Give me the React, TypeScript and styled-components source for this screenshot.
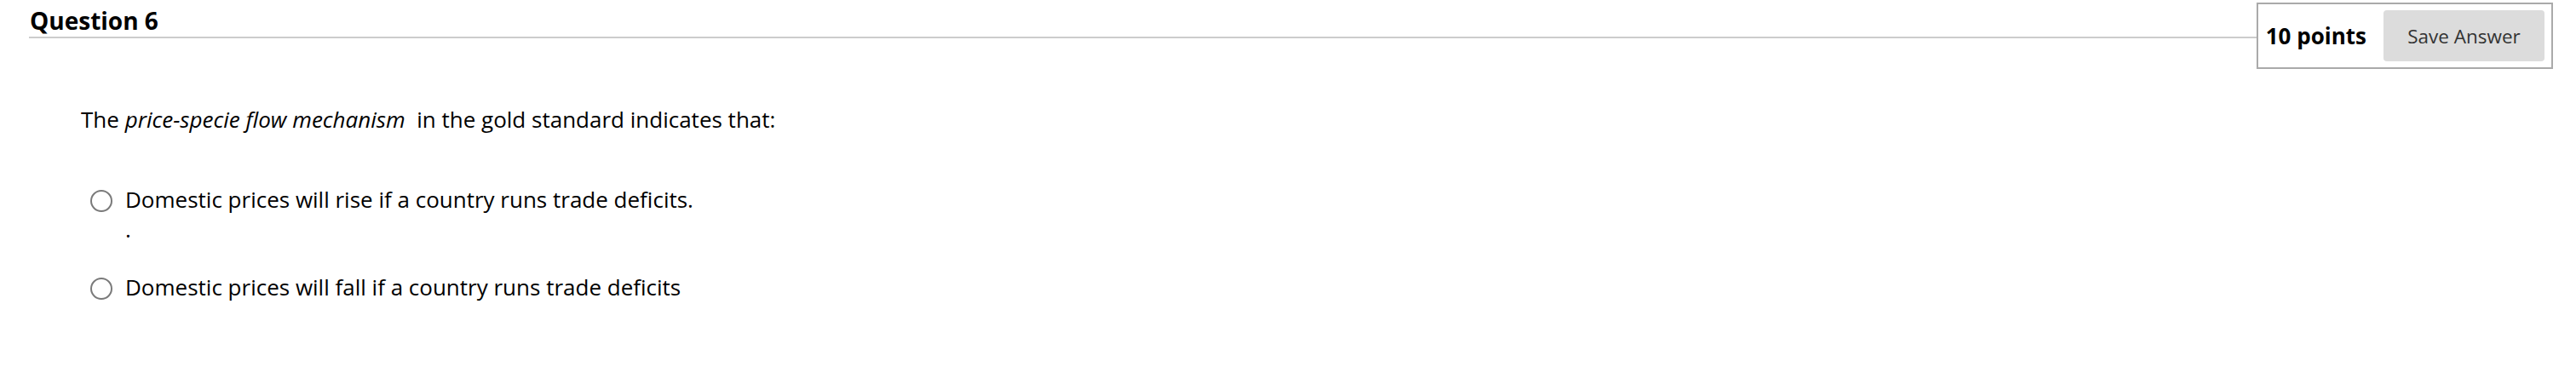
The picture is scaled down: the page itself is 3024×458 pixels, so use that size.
import { FC } from "react";
import styled, { createGlobalStyle } from "styled-components";

const GlobalStyle = createGlobalStyle`
    html, body {
        margin: 0;
        background: #fff;
    }
    body {
        font-family: "Open Sans", "Liberation Sans", sans-serif;
        color: #000;
    }
`

const Page = styled.div`
    padding: 3px 27px 0 34px;
`
const Header = styled.header`
    display: flex;
    align-items: flex-start;
`
const TitleBar = styled.div`
    flex: 1;
    height: 40px;
    display: flex;
    align-items: flex-end;
    border-bottom: 2px solid #cccccc;
`
const Title = styled.h2`
    margin: 0 0 0 1px;
    font-size: 28px;
    font-weight: 700;
    line-height: 38px;
`
const PointsBox = styled.div`
    display: flex;
    align-items: center;
    gap: 20px;
    padding: 7px 8px;
    border: 2px solid #aaaaaa;

    .points {
        font-size: 26px;
        font-weight: 700;
        padding-left: 1px;
    }
`
const SaveButton = styled.button`
    width: 189px;
    height: 60px;
    padding: 0;
    border: none;
    border-radius: 4px;
    background: #dcdcdc;
    color: #333;
    font-family: "Open Sans", "Liberation Sans", sans-serif;
    font-size: 22.5px;
`
const Content = styled.main`
    padding-left: 61px;
    margin-top: 42px;
`
const Prompt = styled.p`
    margin: 0;
    font-size: 26px;
    line-height: 35px;
`
const OptionList = styled.ul`
    list-style: none;
    margin: 59px 0 0;
    padding: 0 0 0 11px;
    display: flex;
    flex-direction: column;
    gap: 33px;
`
const Option = styled.li`
    display: flex;
    align-items: flex-start;
    gap: 15px;
    font-size: 26px;
    line-height: 35px;
`
const Radio = styled.span`
    flex: none;
    box-sizing: border-box;
    width: 26px;
    height: 26px;
    margin-top: 6px;
    border: 2px solid #7a7a7a;
    border-radius: 50%;
`

const options = [
    ["Domestic prices will rise if a country runs trade deficits.", "."],
    ["Domestic prices will fall if a country runs trade deficits"],
]

const App: FC = () => {
    return (
        <Page>
            <GlobalStyle />
            <Header>
                <TitleBar>
                    <Title>Question 6</Title>
                </TitleBar>
                <PointsBox>
                    <span className="points">10 points</span>
                    <SaveButton>Save Answer</SaveButton>
                </PointsBox>
            </Header>

            <Content>
                <Prompt>
                    The <em>price-specie flow mechanism&nbsp;</em> in the gold standard indicates that:
                </Prompt>

                <OptionList>
                    {options.map((lines, i) => (
                        <Option key={i}>
                            <Radio />
                            <div>
                                {lines.map((l, j) => (
                                    <div key={j}>{l}</div>
                                ))}
                            </div>
                        </Option>
                    ))}
                </OptionList>
            </Content>
        </Page>
    )
}

export default App;
